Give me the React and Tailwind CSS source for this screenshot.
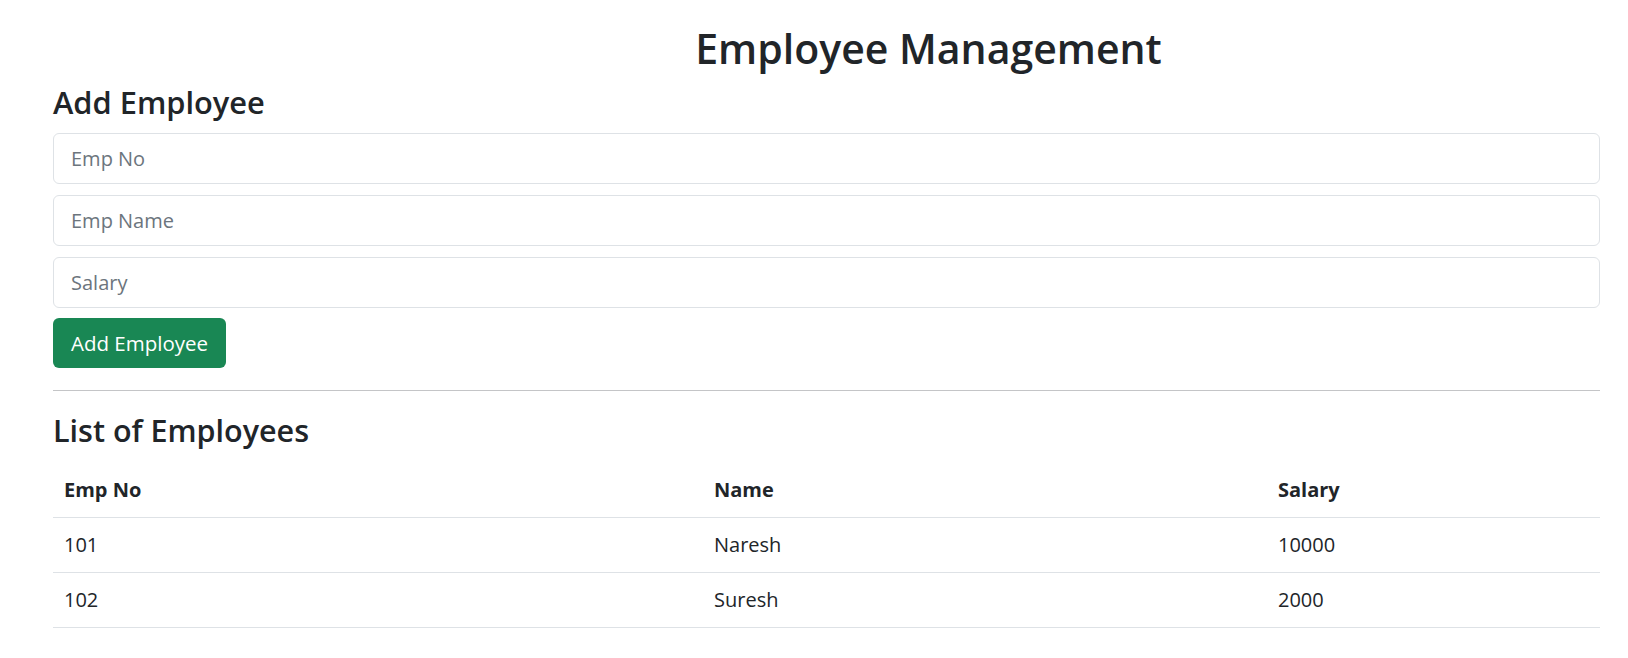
import { useState } from 'react';

const initialEmployees = [
  { empNo: 101, name: 'Naresh', salary: 10000 },
  { empNo: 102, name: 'Suresh', salary: 2000 },
];

export default function App() {
  const [employees, setEmployees] = useState(initialEmployees);
  const [form, setForm] = useState({ empNo: '', name: '', salary: '' });

  const handleChange = (e) => {
    setForm({ ...form, [e.target.name]: e.target.value });
  };

  const handleAdd = () => {
    if (!form.empNo || !form.name) return;
    setEmployees([...employees, { empNo: form.empNo, name: form.name, salary: form.salary }]);
    setForm({ empNo: '', name: '', salary: '' });
  };

  const inputClass =
    "block w-full h-[51px] mb-[11px] px-[17px] text-[20px] text-[#212529] bg-white border border-[#dee2e6] rounded-[6px] outline-none placeholder:text-[#6c757d]";

  return (
    <div className="min-h-screen bg-white px-[53px] pr-[28px] pt-[24px] font-['Open_Sans',sans-serif] text-[#212529]">
      {/* Title */}
      <h1 className="pl-[204px] text-center text-[41px] font-semibold leading-[1.2] mb-[11px]">
        Employee Management
      </h1>

      {/* Add form */}
      <h2 className="text-[30.8px] font-semibold leading-[1.2] mb-[12px]">Add Employee</h2>
      <input name="empNo" value={form.empNo} onChange={handleChange} placeholder="Emp No" className={inputClass} />
      <input name="name" value={form.name} onChange={handleChange} placeholder="Emp Name" className={inputClass} />
      <input name="salary" value={form.salary} onChange={handleChange} placeholder="Salary" className={inputClass} />
      <button
        onClick={handleAdd}
        className="h-[50px] px-[18px] -mt-px text-[20.5px] text-white bg-[#198754] rounded-[6px]"
      >
        Add Employee
      </button>

      <hr className="mt-[22px] mb-[21px] border-0 border-t border-[#c4c5c7]" />

      {/* List */}
      <h2 className="text-[30.5px] font-semibold leading-[1.2] mb-[14px]">List of Employees</h2>
      <table className="w-full text-[20px] text-left border-collapse">
        <thead>
          <tr className="h-[55px] border-b border-[#dee2e6]">
            <th className="w-[650px] px-[11px] font-bold">Emp No</th>
            <th className="w-[564px] px-[11px] font-bold">Name</th>
            <th className="px-[11px] font-bold">Salary</th>
          </tr>
        </thead>
        <tbody>
          {employees.map((emp) => (
            <tr key={emp.empNo} className="h-[55px] border-b border-[#dee2e6]">
              <td className="px-[11px]">{emp.empNo}</td>
              <td className="px-[11px]">{emp.name}</td>
              <td className="px-[11px]">{emp.salary}</td>
            </tr>
          ))}
        </tbody>
      </table>
    </div>
  );
}
